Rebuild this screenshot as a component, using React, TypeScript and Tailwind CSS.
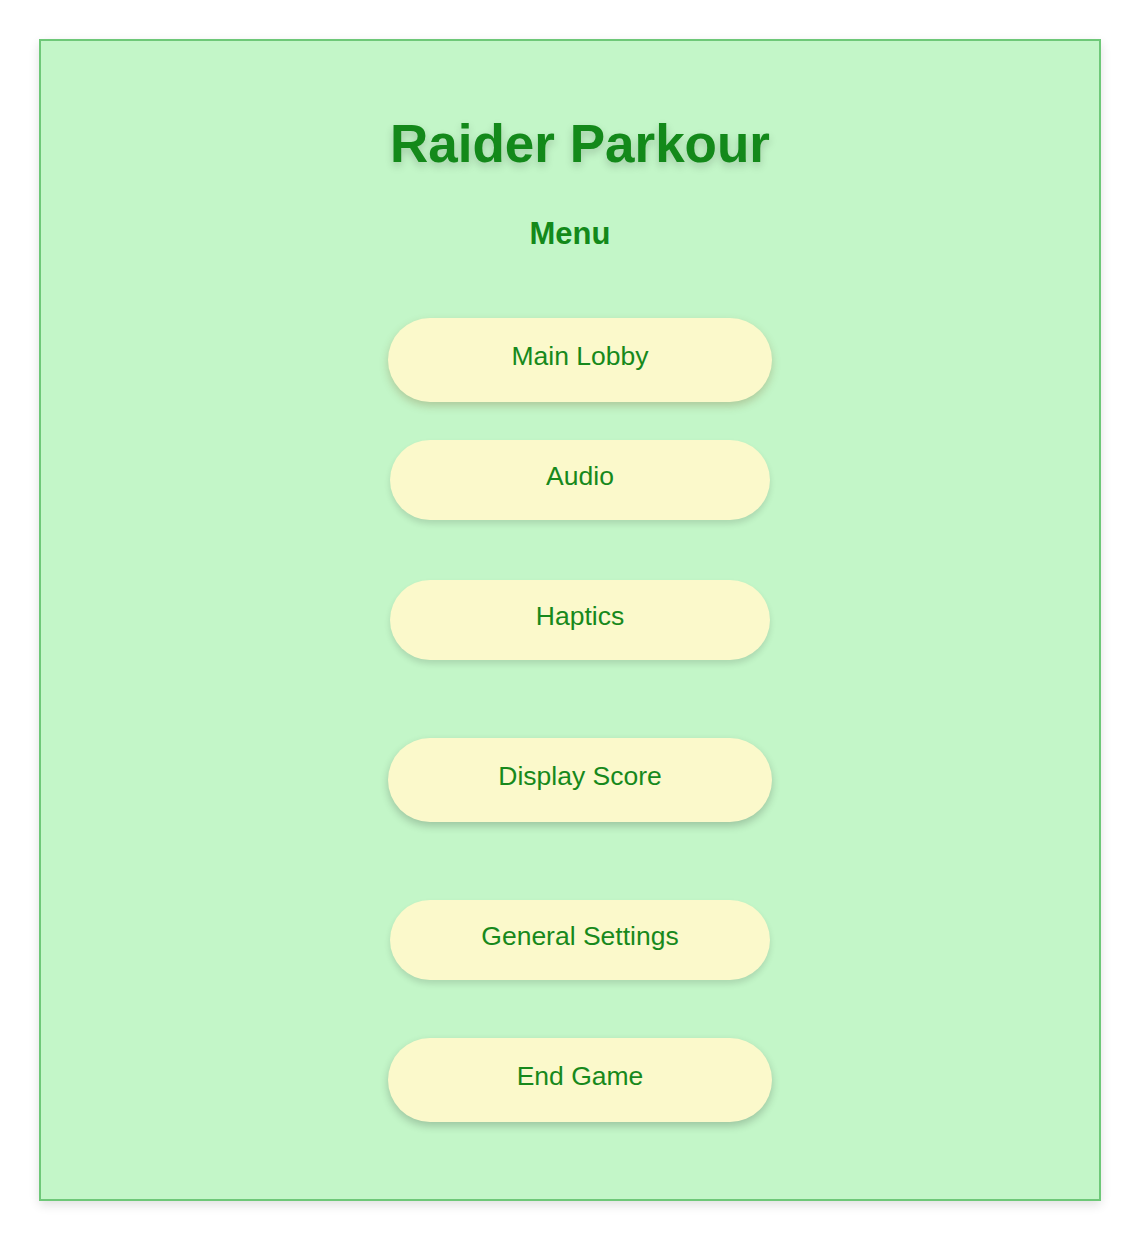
import React from "react";

const btnBase =
  "flex items-center justify-center rounded-full bg-[#fbf9cb] text-[#17891c] text-[26.5px] leading-none pb-[8px]";

export default function App() {
  return (
    <div className="min-h-[1240px] w-[1140px] bg-white pt-[39px] pl-[39px]" style={{ fontFamily: '"Liberation Sans", Arial, sans-serif' }}>
      <div className="w-[1062px] h-[1162px] border-2 border-[#6ec878] bg-[#c3f6c8] shadow-[0_4px_10px_rgba(0,0,0,0.12)] flex flex-col items-center">
        <h1 className="mt-[76px] ml-[20px] text-[53px] leading-none font-bold text-[#13891a] [text-shadow:0_4px_8px_rgba(0,0,0,0.18)]">
          Raider Parkour
        </h1>
        <h2 className="mt-[48px] text-[31px] leading-none font-bold text-[#13891a]">Menu</h2>
        <div className="ml-[20px] flex flex-col items-center">
          <button className={`${btnBase} mt-[69px] w-[384px] h-[84px] shadow-[0_4px_8px_rgba(120,90,40,0.28)]`}>Main Lobby</button>
          <button className={`${btnBase} mt-[38px] w-[380px] h-[80px] shadow-[0_4px_6px_rgba(0,0,0,0.12)]`}>Audio</button>
          <button className={`${btnBase} mt-[60px] w-[380px] h-[80px] shadow-[0_4px_6px_rgba(0,0,0,0.12)]`}>Haptics</button>
          <button className={`${btnBase} mt-[78px] w-[384px] h-[84px] shadow-[0_4px_8px_rgba(0,0,0,0.2)]`}>Display Score</button>
          <button className={`${btnBase} mt-[78px] w-[380px] h-[80px] shadow-[0_4px_6px_rgba(0,0,0,0.12)]`}>General Settings</button>
          <button className={`${btnBase} mt-[58px] w-[384px] h-[84px] shadow-[0_4px_8px_rgba(0,0,0,0.2)]`}>End Game</button>
        </div>
      </div>
    </div>
  );
}
